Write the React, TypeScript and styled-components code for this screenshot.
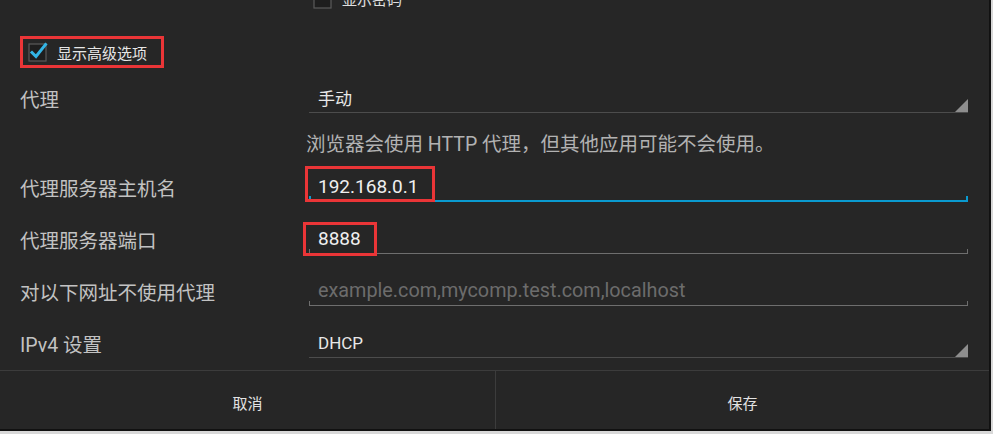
import React from 'react';
import styled, { createGlobalStyle, css } from 'styled-components';

const GlobalStyle = createGlobalStyle`
  html, body { margin: 0; padding: 0; background: #d8d8d8; }
  body {
    width: 993px;
    height: 434px;
    overflow: hidden;
    font-family: Roboto, "Noto Sans CJK SC", sans-serif;
  }
`;

const FONT = `Roboto, "Noto Sans CJK SC", sans-serif`;

const Dialog = styled.div`
  width: 989px;
  height: 429px;
  background: #262626;
  border-right: 2px solid #111;
  border-bottom: 2px solid #111;
  display: flex;
  flex-direction: column;
  overflow: hidden;
`;

const Form = styled.div`
  display: flex;
  flex-direction: column;
  padding: 0 21px 0 20px;
`;

const Row = styled.div<{ $h: number; $top?: number }>`
  display: grid;
  grid-template-columns: 286px 1fr;
  align-items: center;
  height: ${p => p.$h}px;
  margin-top: ${p => p.$top ?? 0}px;
`;

const AdvancedRow = styled.div`
  height: 67px;
  padding-top: 30px;
  box-sizing: border-box;
  display: flex;
  align-items: flex-start;
`;

const AdvancedBox = styled.label`
  display: inline-flex;
  align-items: center;
  gap: 9px;
  height: 32px;
  box-sizing: border-box;
  border: 3px solid #ea3537;
  padding: 0 14px 0 5px;
  color: #e6e6e6;
  font-size: 15px;
`;

const CheckLine = styled.div`
  grid-column: 2;
  display: flex;
  align-items: center;
  gap: 9px;
  padding-left: 7px;
  color: #e0e0e0;
  font-size: 15px;
`;

const Label = styled.div`
  font-size: 19.5px;
  color: #c2c2c2;
  white-space: nowrap;
`;

const Hint = styled.div`
  grid-column: 2;
  font-size: 19.5px;
  color: #b2b2b2;
  white-space: nowrap;
`;

type Kind = 'spinner' | 'edit' | 'focus';

const lineColor = (k: Kind) => (k === 'focus' ? '#0a9acf' : k === 'spinner' ? '#4c4c4c' : '#6e6e6e');

const Field = styled.div<{ $kind: Kind }>`
  position: relative;
  height: 28px;
  margin-left: 3px;
  padding-left: 9px;
  display: flex;
  align-items: center;
  border-bottom: ${p => (p.$kind === 'focus' ? 2 : 1)}px solid ${p => lineColor(p.$kind)};
  ${p =>
    p.$kind !== 'spinner' &&
    css`
      &::before,
      &::after {
        content: '';
        position: absolute;
        bottom: 0;
        width: ${p.$kind === 'focus' ? 2 : 1}px;
        height: 4px;
        background: ${lineColor(p.$kind)};
      }
      &::before { left: 0; }
      &::after { right: 0; }
    `}
`;

const SpinnerText = styled.span`
  font-size: 17px;
  color: #e8e8e8;
`;

const Value = styled.span`
  font-size: 19px;
  color: #efefef;
`;

const Placeholder = styled.span`
  font-size: 19.8px;
  color: #6c6c6c;
  white-space: nowrap;
`;

const Corner = styled.svg`
  margin-left: auto;
  align-self: flex-end;
  display: block;
`;

const Callout = styled.span<{ $l: number; $t: number; $w: number; $h: number }>`
  position: absolute;
  left: ${p => p.$l}px;
  top: ${p => p.$t}px;
  width: ${p => p.$w}px;
  height: ${p => p.$h}px;
  box-sizing: border-box;
  border: 3px solid #ea3537;
  pointer-events: none;
`;

const ButtonBar = styled.div`
  display: grid;
  grid-template-columns: 496px 1fr;
  height: 58px;
  border-top: 1px solid #3c3c3c;
`;

const DialogButton = styled.button<{ $divider?: boolean }>`
  background: transparent;
  border: none;
  border-right: ${p => (p.$divider ? '1px solid #3c3c3c' : 'none')};
  color: #e2e2e2;
  font-family: ${FONT};
  font-size: 15px;
  padding: 4px 0 0;
  cursor: pointer;
`;

const CheckBox: React.FC<{ checked?: boolean }> = ({ checked }) => (
  <svg width="20" height="20" viewBox="0 0 20 20" style={{ display: 'block', flex: 'none' }}>
    <rect x="1" y="2" width="17" height="17" fill="#1e1e1e" stroke="#5a5a5a" strokeWidth="1.2" />
    {checked && (
      <path d="M4 10.5 L8 14.5 L17.5 2.5" fill="none" stroke="#33b5e5" strokeWidth="3" strokeLinecap="square" />
    )}
  </svg>
);

const SpinnerCorner = () => (
  <Corner width="13" height="13" viewBox="0 0 13 13">
    <polygon points="13,0 13,13 0,13" fill="#8e8e8e" />
  </Corner>
);

export default function App() {
  return (
    <>
      <GlobalStyle />
      <Dialog>
        <Form>
          <Row $h={18} $top={-12}>
            <CheckLine>
              <CheckBox />
              <span>显示密码</span>
            </CheckLine>
          </Row>

          <AdvancedRow>
            <AdvancedBox>
              <CheckBox checked />
              <span>显示高级选项</span>
            </AdvancedBox>
          </AdvancedRow>

          <Row $h={50}>
            <Label>代理</Label>
            <Field $kind="spinner">
              <SpinnerText>手动</SpinnerText>
              <SpinnerCorner />
            </Field>
          </Row>

          <Row $h={38}>
            <Hint>浏览器会使用 HTTP 代理，但其他应用可能不会使用。</Hint>
          </Row>

          <Row $h={52}>
            <Label>代理服务器主机名</Label>
            <Field $kind="focus">
              <Value>192.168.0.1</Value>
              <Callout $l={-4} $t={-6} $w={130} $h={36} />
            </Field>
          </Row>

          <Row $h={52}>
            <Label>代理服务器端口</Label>
            <Field $kind="edit">
              <Value>8888</Value>
              <Callout $l={-6} $t={-3} $w={74} $h={34} />
            </Field>
          </Row>

          <Row $h={52}>
            <Label>对以下网址不使用代理</Label>
            <Field $kind="edit">
              <Placeholder>example.com,mycomp.test.com,localhost</Placeholder>
            </Field>
          </Row>

          <Row $h={53}>
            <Label>IPv4 设置</Label>
            <Field $kind="spinner">
              <SpinnerText>DHCP</SpinnerText>
              <SpinnerCorner />
            </Field>
          </Row>
        </Form>

        <ButtonBar>
          <DialogButton $divider>取消</DialogButton>
          <DialogButton>保存</DialogButton>
        </ButtonBar>
      </Dialog>
    </>
  );
}
